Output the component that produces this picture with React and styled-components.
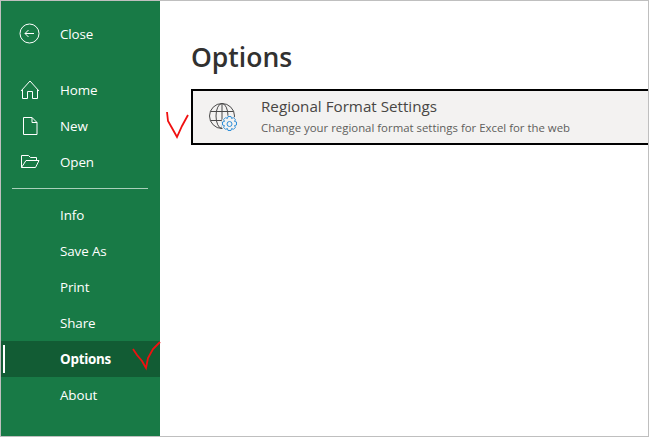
import styled, { createGlobalStyle } from 'styled-components';

const GlobalStyle = createGlobalStyle`
  html, body {
    margin: 0;
    padding: 0;
    background: #fff;
  }
  * {
    box-sizing: border-box;
  }
`;

const Frame = styled.div`
  position: relative;
  display: flex;
  width: 649px;
  height: 437px;
  overflow: hidden;
  border: 1px solid #bfbfbf;
  background: #fff;
  font-family: "Open Sans", "Noto Sans", sans-serif;
`;

const Sidebar = styled.nav`
  display: flex;
  flex-direction: column;
  flex: 0 0 159px;
  padding-top: 15px;
  background: #187a46;
`;

const MenuRow = styled.div`
  position: relative;
  display: flex;
  align-items: center;
  flex: 0 0 36px;
  padding-left: 59px;
  margin-bottom: ${(p) => (p.$gap ? '20px' : '0')};
  color: #fff;
  font-size: 13.4px;
  font-weight: ${(p) => (p.$active ? 700 : 400)};
  letter-spacing: ${(p) => (p.$active ? '-0.25px' : '-0.1px')};
  background: ${(p) => (p.$active ? '#125c34' : 'transparent')};

  ${(p) =>
    p.$active &&
    `&::before {
      content: '';
      position: absolute;
      left: 2px;
      top: 4px;
      bottom: 4px;
      width: 2px;
      background: #fff;
    }`}
`;

const MenuIcon = styled.svg`
  position: absolute;
  left: 17px;
  top: 6px;
  width: 24px;
  height: 24px;
  fill: none;
  stroke: #fff;
  stroke-width: 1;
`;

const Divider = styled.div`
  height: 1px;
  margin: 8px 12px 8px 11px;
  background: #a9cfba;
`;

const Main = styled.main`
  flex: 1;
  padding-top: 38px;
`;

const Title = styled.h1`
  margin: 0 0 14px 31px;
  color: #323130;
  font-size: 26.5px;
  font-weight: 600;
  line-height: 36px;
`;

const Card = styled.div`
  display: flex;
  align-items: center;
  height: 56px;
  margin-left: 31px;
  padding-left: 15px;
  background: #f3f2f1;
  border: 2px solid #000;
  border-right: 0;
`;

const CardIcon = styled.svg`
  flex: 0 0 32px;
  width: 32px;
  height: 32px;
  margin-right: 21px;
  fill: none;
`;

const CardText = styled.div`
  display: flex;
  flex-direction: column;
  gap: 4px;
  margin-top: -4px;
`;

const CardTitle = styled.div`
  color: #484644;
  font-size: 15.2px;
  line-height: 20px;
`;

const CardSub = styled.div`
  color: #605e5c;
  font-size: 11.4px;
  line-height: 15px;
`;

const Scribble = styled.svg`
  position: absolute;
  left: -1px;
  top: -1px;
  width: 649px;
  height: 437px;
  fill: none;
  stroke: #f01010;
  stroke-width: 1.8;
  pointer-events: none;
`;

const topItems = [
  {
    label: 'Home',
    icon: <path d="M3 13 12 3l9 10M4.500 11.500v9h5V13.500h5v7h5v-9" />,
  },
  {
    label: 'New',
    icon: <path d="M5.500 3.500H14l5 5v12H5.500zM14 3.500v5h5" />,
  },
  {
    label: 'Open',
    icon: <path d="M3.500 17.500v-12h7l2 2h6V10M3.500 17.500h14l3.500-7H8z" />,
  },
];

const bottomItems = ['Info', 'Save As', 'Print', 'Share', 'Options', 'About'];

export default function App() {
  return (
    <>
      <GlobalStyle />
      <Frame>
        <Sidebar>
          <MenuRow $gap>
            <MenuIcon viewBox="0 0 24 24">
              <circle cx="11.500" cy="11.500" r="9.500" />
              <path d="M16 11.500H7M10.500 8 7 11.500l3.500 3.500" />
            </MenuIcon>
            Close
          </MenuRow>
          {topItems.map((item) => (
            <MenuRow key={item.label}>
              <MenuIcon viewBox="0 0 24 24">{item.icon}</MenuIcon>
              {item.label}
            </MenuRow>
          ))}
          <Divider />
          {bottomItems.map((label) => (
            <MenuRow key={label} $active={label === 'Options'}>
              {label}
            </MenuRow>
          ))}
        </Sidebar>
        <Main>
          <Title>Options</Title>
          <Card>
            <CardIcon viewBox="0 0 32 32">
              <g stroke="#4a4a4a" strokeWidth="1">
                <circle cx="14" cy="15" r="12.500" />
                <ellipse cx="14" cy="15" rx="6" ry="12.500" />
                <path d="M2.500 10.500h23M2.500 19.500h15M14 2.500v25" />
              </g>
              <circle cx="21.500" cy="23" r="8.500" fill="#f3f2f1" />
              <path
                d="M20 15.500h3l.6 2 1.800-.9 2 2-.9 1.800 2 .6v3l-2 .6.9 1.800-2 2-1.800-.9-.6 2h-3l-.6-2-1.800.9-2-2 .9-1.800-2-.6v-3l2-.6-.9-1.800 2-2 1.800.9z"
                stroke="#2f8fd8"
                strokeWidth="1"
              />
              <circle cx="21.500" cy="23" r="2.500" stroke="#2f8fd8" strokeWidth="1" />
            </CardIcon>
            <CardText>
              <CardTitle>Regional Format Settings</CardTitle>
              <CardSub>Change your regional format settings for Excel for the web</CardSub>
            </CardText>
          </Card>
        </Main>
        <Scribble viewBox="0 0 649 437">
          <path d="M167 112l1 9 4 7 5 9 5-11 6-11" />
          <path d="M133 349l4 6 5 6 4 7 2-10 5-9 7-7" />
        </Scribble>
      </Frame>
    </>
  );
}
